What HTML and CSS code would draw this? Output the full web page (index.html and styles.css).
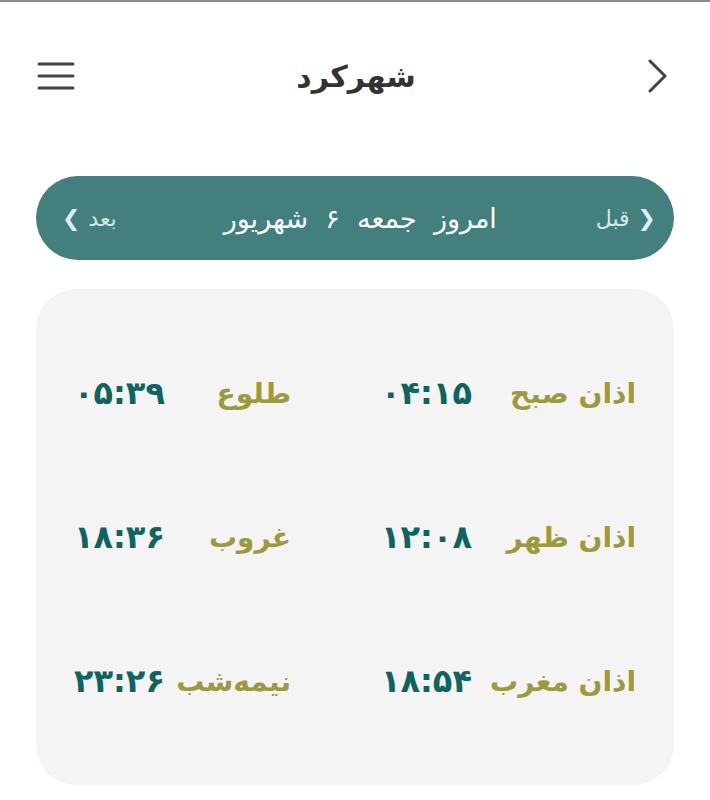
FILE: index.html
```html
<!DOCTYPE html>
<html lang="fa" dir="rtl">
<head>
<meta charset="utf-8">
<title>شهرکرد</title>
<link rel="stylesheet" href="styles.css">
</head>
<body>
<div class="page">
  <header class="topbar">
    <button class="icon-btn back" aria-label="بازگشت">
      <svg width="22" height="34" viewBox="0 0 22 34"><path d="M3 2 L18 17 L3 32" fill="none" stroke="#444" stroke-width="3" stroke-linecap="round" stroke-linejoin="round"/></svg>
    </button>
    <h1 class="title">شهرکرد</h1>
    <button class="icon-btn menu" aria-label="منو">
      <svg width="38" height="30" viewBox="0 0 38 30"><g stroke="#444" stroke-width="3" stroke-linecap="round"><line x1="2" y1="3" x2="36" y2="3"/><line x1="2" y1="15" x2="36" y2="15"/><line x1="2" y1="27" x2="36" y2="27"/></g></svg>
    </button>
  </header>

  <nav class="daybar">
    <span class="nav prev"><span class="chev">❮</span>قبل</span>
    <span class="today">امروز&nbsp; جمعه&nbsp; ۶&nbsp; شهریور</span>
    <span class="nav next">بعد<span class="chev">❯</span></span>
  </nav>

  <section class="card">
    <div class="cell right"><span class="label">اذان صبح</span><span class="time">۰۴:۱۵</span></div>
    <div class="cell left"><span class="label">طلوع</span><span class="time">۰۵:۳۹</span></div>
    <div class="cell right"><span class="label">اذان ظهر</span><span class="time">۱۲:۰۸</span></div>
    <div class="cell left"><span class="label">غروب</span><span class="time">۱۸:۳۶</span></div>
    <div class="cell right"><span class="label">اذان مغرب</span><span class="time">۱۸:۵۴</span></div>
    <div class="cell left"><span class="label">نیمه‌شب</span><span class="time">۲۳:۲۶</span></div>
  </section>
</div>
</body>
</html>
```

FILE: styles.css
```css
html, body {
  margin: 0;
  padding: 0;
  background: #ffffff;
}
body {
  font-family: "DejaVu Sans", sans-serif;
  border-top: 2px solid #8a8a8a;
}
.page {
  width: 710px;
  box-sizing: border-box;
  padding: 0 36px;
}
.topbar {
  height: 148px;
  display: flex;
  align-items: center;
  justify-content: space-between;
}
.icon-btn {
  background: none;
  border: 0;
  padding: 0;
  display: flex;
  align-items: center;
}
.back { margin-right: 5px; }
.menu { margin-left: 1px; }
.title {
  margin: 0 10px 0 0;
  font-size: 30px;
  font-weight: bold;
  color: #333333;
}
.daybar {
  margin-top: 26px;
  height: 84px;
  border-radius: 42px;
  background: #437f7d;
  display: flex;
  align-items: center;
  justify-content: space-between;
  padding: 0 18px 0 26px;
  color: #ffffff;
}
.nav {
  font-size: 22px;
  color: #d4e8e6;
  display: flex;
  align-items: center;
  gap: 8px;
}
.chev {
  font-size: 22px;
  font-weight: bold;
  color: #d9f0ee;
}
.today {
  font-size: 27px;
  color: #ffffff;
  margin-left: 8px;
}
.card {
  margin-top: 29px;
  background: #f4f4f4;
  border-radius: 40px;
  padding: 32px 0;
  display: grid;
  grid-template-columns: 1fr 1fr;
  grid-auto-rows: 144px;
}
.cell {
  display: flex;
  align-items: center;
  justify-content: space-between;
  font-weight: bold;
}
.cell.right { padding: 0 38px 0 26px; }
.cell.left { padding: 0 64px 0 38px; }
.label { color: #9c9a3c; font-size: 28px; }
.time { color: #0e6461; font-size: 32px; }
```
